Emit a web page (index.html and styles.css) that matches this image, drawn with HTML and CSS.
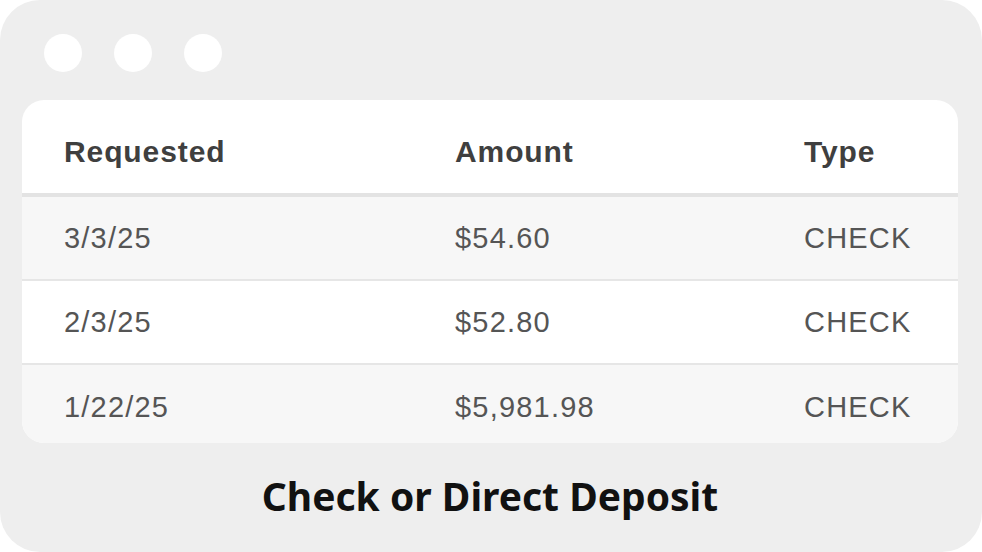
FILE: index.html
```html
<!DOCTYPE html>
<html>
<head>
<meta charset="utf-8">
<link rel="stylesheet" href="styles.css">
</head>
<body>
<div class="card">
  <div class="dots">
    <span class="dot"></span><span class="dot"></span><span class="dot"></span>
  </div>
  <div class="panel">
    <div class="row head">
      <div class="c1">Requested</div><div class="c2">Amount</div><div class="c3">Type</div>
    </div>
    <div class="row alt">
      <div class="c1">3/3/25</div><div class="c2">$54.60</div><div class="c3">CHECK</div>
    </div>
    <div class="row">
      <div class="c1">2/3/25</div><div class="c2">$52.80</div><div class="c3">CHECK</div>
    </div>
    <div class="row alt last">
      <div class="c1">1/22/25</div><div class="c2">$5,981.98</div><div class="c3">CHECK</div>
    </div>
  </div>
  <div class="caption">Check or Direct Deposit</div>
</div>
</body>
</html>
```
FILE: styles.css
```css
html, body {
  margin: 0;
  padding: 0;
  background: #ffffff;
}
.card {
  width: 982px;
  height: 552px;
  box-sizing: border-box;
  background: #eeeeee;
  border-radius: 40px;
  padding: 34px 24px 0 22px;
  display: flex;
  flex-direction: column;
}
.dots {
  display: flex;
  gap: 32px;
  padding-left: 22px;
  height: 38px;
}
.dot {
  width: 38px;
  height: 38px;
  border-radius: 50%;
  background: #ffffff;
}
.panel {
  margin-top: 28px;
  background: #ffffff;
  border-radius: 22px;
  overflow: hidden;
  display: flex;
  flex-direction: column;
}
.row {
  display: flex;
  align-items: center;
  height: 82px;
  box-sizing: content-box;
  border-bottom: 2px solid #e6e6e6;
  font-family: "Liberation Sans", Arial, sans-serif;
  font-size: 29px;
  letter-spacing: 1.2px;
  color: #555555;
}
.row.alt { background: #f7f7f7; }
.row.last { border-bottom: none; height: 72px; padding-top: 6px; }
.row.head {
  height: 83px;
  padding-top: 10px;
  border-bottom: 4px solid #e3e3e3;
  font-weight: bold;
  font-size: 30px;
  letter-spacing: 0.9px;
  color: #3f3f3f;
}
.c1 { width: 433px; padding-left: 42px; box-sizing: border-box; flex: none; }
.c2 { width: 349px; flex: none; }
.c3 { flex: 1; }
.caption {
  flex: 1;
  display: flex;
  align-items: center;
  justify-content: center;
  padding-bottom: 4px;
  font-family: "Noto Sans", sans-serif;
  font-weight: 700;
  font-size: 39px;
  color: #111111;
}
```
